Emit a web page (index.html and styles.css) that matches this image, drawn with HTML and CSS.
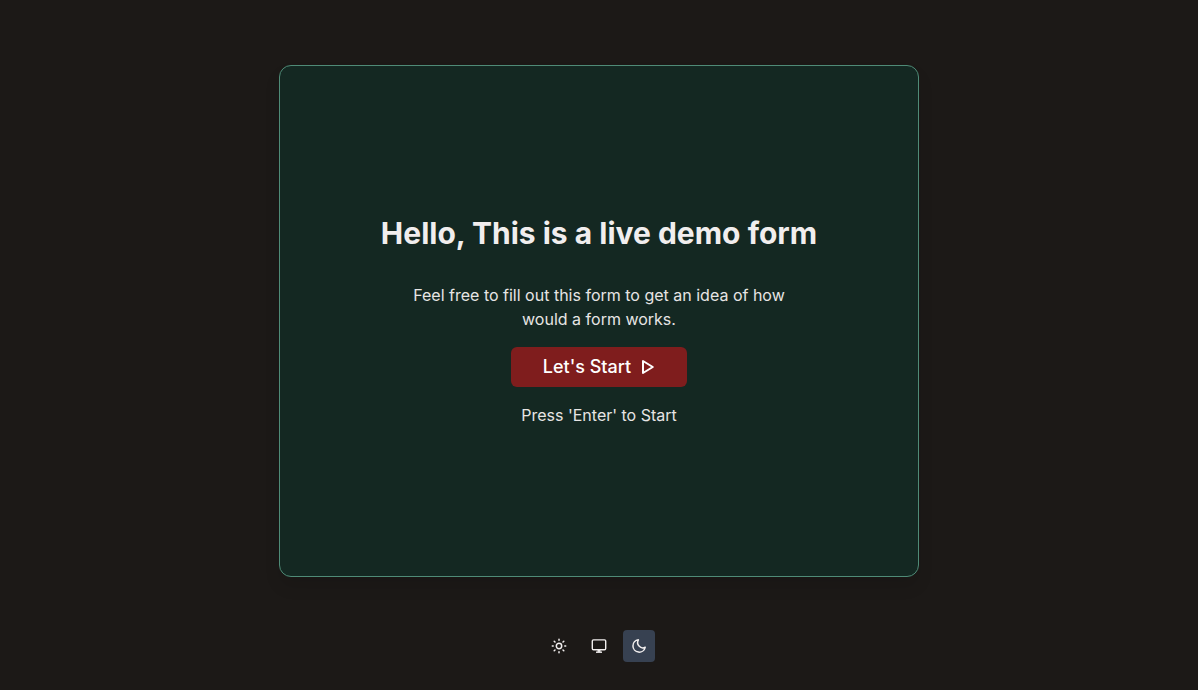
FILE: index.html
```html
<!DOCTYPE html>
<html lang="en">
<head>
    <meta charset="UTF-8">
    <meta name="viewport" content="width=device-width, initial-scale=1.0">
    <title>Live demo form</title>
    <link rel="stylesheet" href="styles.css">
</head>
<body>
    <main class="main">
        <section class="card">
            <h1 class="title">Hello, This is a live demo form</h1>
            <p class="description">Feel free to fill out this form to get an idea of how would a form works.</p>
            <button type="button" class="btn-start">
                Let's Start
                <svg class="icon-play" viewBox="0 0 16 16" fill="none" stroke="currentColor" stroke-width="2" stroke-linejoin="round" aria-hidden="true">
                    <path d="M4 2v12l9.8-6z"/>
                </svg>
            </button>
            <p class="hint">Press 'Enter' to Start</p>
        </section>
    </main>

    <footer class="theme-switch">
        <button type="button" class="btn-theme" aria-label="Light theme">
            <svg viewBox="0 0 16 16" fill="none" stroke="currentColor" stroke-width="1.5" stroke-linecap="round" aria-hidden="true">
                <circle cx="8" cy="8" r="2.7"/>
                <path d="M8 1.3v.9M8 13.8v.9M1.3 8h.9M13.8 8h.9M3.2 3.2l.8.8M12 12l.8.8M3.2 12.8l.8-.8M12 4l.8-.8"/>
            </svg>
        </button>
        <button type="button" class="btn-theme" aria-label="System theme">
            <svg viewBox="0 0 16 16" fill="none" stroke="currentColor" stroke-width="1.4" stroke-linejoin="round" aria-hidden="true">
                <rect x="1.3" y="1.9" width="13.4" height="9.8" rx="1.2"/>
                <path d="M8 11.7v2.2" stroke-width="3"/>
                <path d="M5 14.2h6"/>
            </svg>
        </button>
        <button type="button" class="btn-theme active" aria-label="Dark theme" aria-pressed="true">
            <svg viewBox="0 0 16 16" fill="none" stroke="currentColor" stroke-width="1.5" stroke-linecap="round" stroke-linejoin="round" aria-hidden="true">
                <path d="M7.4 1.8A6.2 6.2 0 1 0 14.2 9.3 5.3 5.3 0 0 1 7.4 1.8z"/>
            </svg>
        </button>
    </footer>
</body>
</html>
```
FILE: styles.css
```css
:root {
    --bg-color: #1c1917;
    --card-bg: #142822;
    --card-border: #4f8b77;
    --text-color: #f1eeee;
    --muted-color: #e7e5e4;
    --primary-color: #7f1d1d;
    --active-color: #374151;
}

* {
    margin: 0;
    padding: 0;
    box-sizing: border-box;
}

body {
    min-height: 100vh;
    display: flex;
    flex-direction: column;
    font-family: Inter, "Liberation Sans", sans-serif;
    font-size: 16px;
    line-height: 24px;
    color: var(--muted-color);
    background-color: var(--bg-color);
}

.main {
    flex: 1;
    display: flex;
    align-items: center;
    justify-content: center;
    padding: 12px 16px 0;
}

.card {
    width: 100%;
    max-width: 640px;
    min-height: 512px;
    display: flex;
    flex-direction: column;
    align-items: center;
    justify-content: center;
    gap: 16px;
    padding: 32px;
    text-align: center;
    background-color: var(--card-bg);
    border: 1px solid var(--card-border);
    border-radius: 12px;
    box-shadow: 0 10px 15px rgba(0, 0, 0, 0.1);
}

.title {
    margin-bottom: 16px;
    font-size: 30px;
    line-height: 36px;
    font-weight: 700;
    color: var(--text-color);
}

.description {
    max-width: 384px;
}

.btn-start {
    display: flex;
    align-items: center;
    gap: 8px;
    height: 40px;
    padding: 0 32px;
    font: inherit;
    font-size: 18px;
    line-height: 28px;
    font-weight: 500;
    color: #fff;
    background-color: var(--primary-color);
    border: none;
    border-radius: 6px;
    cursor: pointer;
}

.icon-play {
    width: 16px;
    height: 16px;
}

.theme-switch {
    display: flex;
    justify-content: center;
    gap: 8px;
    padding-bottom: 28px;
}

.btn-theme {
    width: 32px;
    height: 32px;
    display: flex;
    align-items: center;
    justify-content: center;
    color: var(--text-color);
    background-color: transparent;
    border: none;
    border-radius: 4px;
    cursor: pointer;
}

.btn-theme svg {
    width: 16px;
    height: 16px;
}

.btn-theme.active {
    background-color: var(--active-color);
}
```
